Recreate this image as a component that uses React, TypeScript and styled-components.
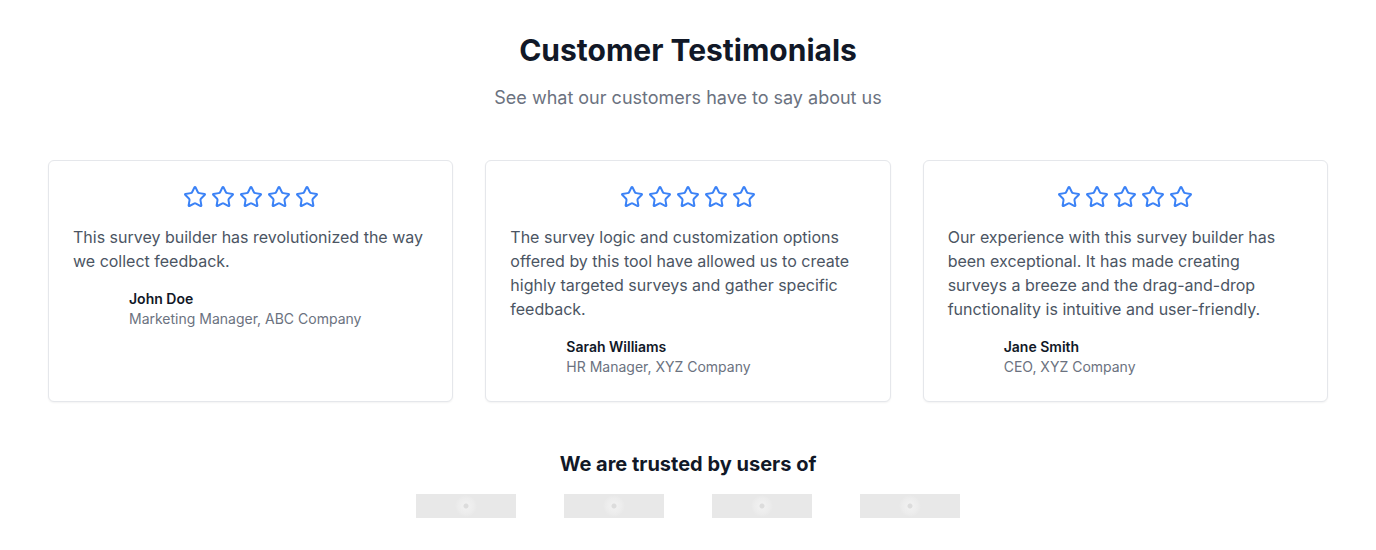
import React from "react";
import styled, { createGlobalStyle } from "styled-components";
import { Star } from "lucide-react";

const Global = createGlobalStyle`
  html, body { margin: 0; padding: 0; background: #ffffff; }
  body { font-family: Inter, "Noto Sans", sans-serif; -webkit-font-smoothing: antialiased; }
  * { box-sizing: border-box; }
`;

const Section = styled.section`
  padding: 32px 0;
`;

const Container = styled.div`
  max-width: 1280px;
  margin: 0 auto;
  display: flex;
  flex-direction: column;
  align-items: center;
`;

const Title = styled.h2`
  margin: 0;
  font-size: 30px;
  line-height: 36px;
  font-weight: 700;
  color: #111827;
`;

const Subtitle = styled.p`
  margin: 16px 0 0;
  font-size: 18px;
  line-height: 28px;
  color: #6b7280;
`;

const Grid = styled.div`
  margin-top: 48px;
  width: 100%;
  display: grid;
  grid-template-columns: repeat(3, 1fr);
  gap: 32px;
`;

const Card = styled.div`
  background: #fff;
  border: 1px solid #e5e7eb;
  border-radius: 6px;
  box-shadow: 0 1px 2px rgba(0, 0, 0, 0.05);
  padding: 24px;
`;

const Stars = styled.div`
  display: flex;
  justify-content: center;
  gap: 4px;
  color: #3b82f6;
  margin-bottom: 16px;
`;

const Quote = styled.p`
  margin: 0;
  font-size: 16px;
  line-height: 24px;
  color: #4b5563;
`;

const Author = styled.div`
  margin-top: 16px;
  display: flex;
  align-items: center;
`;

const Avatar = styled.div`
  width: 40px;
  height: 40px;
  margin-right: 16px;
  flex-shrink: 0;
`;

const Name = styled.div`
  font-size: 14px;
  line-height: 20px;
  font-weight: 600;
  color: #111827;
`;

const Role = styled.div`
  font-size: 14px;
  line-height: 20px;
  color: #6b7280;
`;

const Trusted = styled.h3`
  margin: 48px 0 0;
  font-size: 20px;
  line-height: 28px;
  font-weight: 700;
  color: #111827;
`;

const Logos = styled.div`
  margin-top: 16px;
  display: flex;
  gap: 48px;
`;

const Logo = styled.div`
  width: 100px;
  height: 24px;
  background: #e8e8e8;
  display: flex;
  align-items: center;
  justify-content: center;
`;

const LogoMark = styled.div`
  width: 22px;
  height: 22px;
  border-radius: 50%;
  background: radial-gradient(circle, #dcdcdc 0 2px, #f0f0f0 3px, #ececec 8px, #e8e8e8 11px);
`;

const items = [
  {
    quote: "This survey builder has revolutionized the way we collect feedback.",
    name: "John Doe",
    role: "Marketing Manager, ABC Company",
  },
  {
    quote:
      "The survey logic and customization options offered by this tool have allowed us to create highly targeted surveys and gather specific feedback.",
    name: "Sarah Williams",
    role: "HR Manager, XYZ Company",
  },
  {
    quote:
      "Our experience with this survey builder has been exceptional. It has made creating surveys a breeze and the drag-and-drop functionality is intuitive and user-friendly.",
    name: "Jane Smith",
    role: "CEO, XYZ Company",
  },
];

export default function App() {
  return (
    <>
      <Global />
      <Section>
        <Container>
          <Title>Customer Testimonials</Title>
          <Subtitle>See what our customers have to say about us</Subtitle>
          <Grid>
            {items.map((t) => (
              <Card key={t.name}>
                <Stars>
                  {[0, 1, 2, 3, 4].map((i) => (
                    <Star key={i} size={24} strokeWidth={2} />
                  ))}
                </Stars>
                <Quote>{t.quote}</Quote>
                <Author>
                  <Avatar />
                  <div>
                    <Name>{t.name}</Name>
                    <Role>{t.role}</Role>
                  </div>
                </Author>
              </Card>
            ))}
          </Grid>
          <Trusted>We are trusted by users of</Trusted>
          <Logos>
            {[0, 1, 2, 3].map((i) => (
              <Logo key={i}>
                <LogoMark />
              </Logo>
            ))}
          </Logos>
        </Container>
      </Section>
    </>
  );
}
